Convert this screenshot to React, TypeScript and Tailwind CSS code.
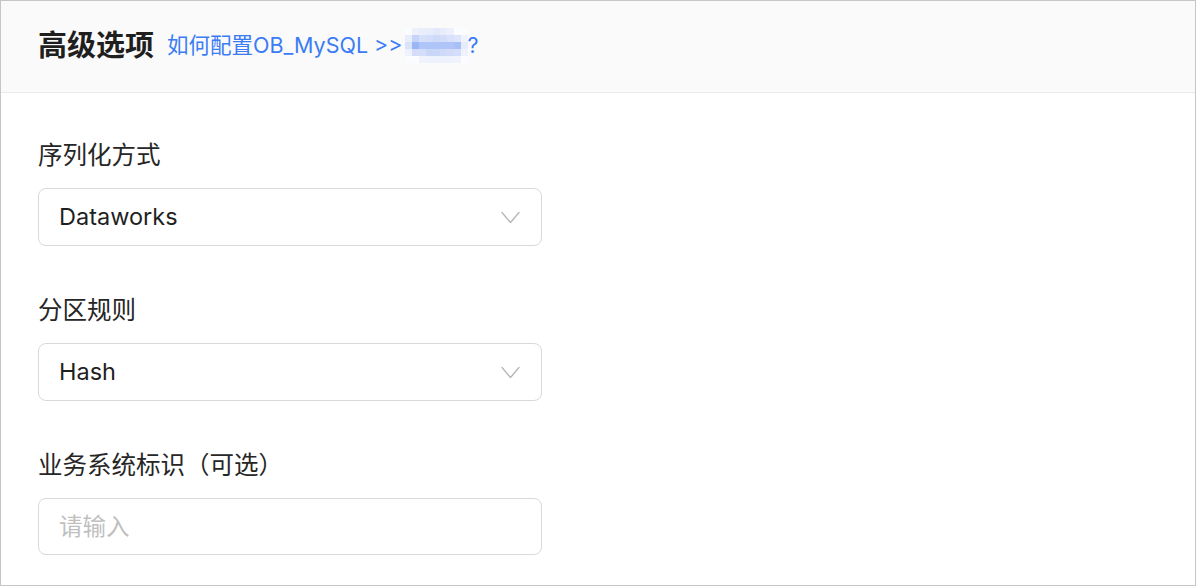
import React from "react";

const mosaic: string[][] = [
  ["#fbfcff", "#eef1fb", "#eaeefb", "#e8edfb", "#e3e9fb", "#e8edfb", "#eef1fc", "#fbfcff", "#fbfcff"],
  ["#e9eefb", "#c5d4f8", "#d6e0f9", "#d4defa", "#cfdaf9", "#d3ddf9", "#d9e2fa", "#dde5fa", "#f0f3fc"],
  ["#dbe3fa", "#9bb6f5", "#b0c5f7", "#b0c5f7", "#b0c5f7", "#b0c5f7", "#b0c5f7", "#a9c0f6", "#e6ecfb"],
  ["#eef2fc", "#d3ddf9", "#d4defa", "#c8d6f8", "#c8d6f8", "#cfdaf9", "#d2dcf9", "#d4defa", "#eef2fc"],
  ["#fbfcff", "#fbfcff", "#f0f3fc", "#eef2fc", "#eef2fc", "#eef2fc", "#eef2fc", "#f0f3fc", "#fbfcff"],
];

function Chevron() {
  return (
    <svg width="19" height="13" viewBox="0 0 19 13" fill="none" className="shrink-0">
      <path d="M1 1.5 L9.5 11.5 L18 1.5" stroke="#b5b5b5" strokeWidth="1.3" strokeLinecap="round" strokeLinejoin="round" />
    </svg>
  );
}

function Field({ label, children }: { label: string; children: React.ReactNode }) {
  return (
    <div className="flex flex-col">
      <div className="h-[32px] leading-[32px] text-[24.5px] text-[#262626]">{label}</div>
      <div className="mt-[17px]">{children}</div>
    </div>
  );
}

function Select({ value }: { value: string }) {
  return (
    <div className="w-[504px] h-[58px] border border-[#d9d9d9] rounded-[8px] bg-white flex items-center justify-between pl-[20px] pr-[21px]">
      <span className="text-[23.5px] text-[#1f1f1f]">{value}</span>
      <Chevron />
    </div>
  );
}

export default function App() {
  return (
    <div
      className="w-[1196px] h-[586px] border border-[#c6c6c6] bg-white flex flex-col overflow-hidden"
      style={{ fontFamily: 'Inter, "Noto Sans CJK SC", sans-serif' }}
    >
      <div className="h-[92px] shrink-0 bg-[#fafafa] border-b border-[#ebebeb] flex items-center pl-[37px] pb-[2px]">
        <span className="text-[29px] font-bold text-[#1f1f1f] leading-none">高级选项</span>
        <span className="ml-[13px] text-[21.5px] text-[#3b7cf5] flex items-center leading-none">
          如何配置OB_MySQL &gt;&gt;
          <span className="ml-[2px] inline-grid grid-cols-9">
            {mosaic.flatMap((row, r) =>
              row.map((c, i) => (
                <span key={`${r}-${i}`} className="w-[7px] h-[7px]" style={{ backgroundColor: c }} />
              ))
            )}
          </span>
          ?
        </span>
      </div>
      <div className="flex flex-col gap-[48px] pl-[37px] pt-[46px]">
        <Field label="序列化方式">
          <Select value="Dataworks" />
        </Field>
        <Field label="分区规则">
          <Select value="Hash" />
        </Field>
        <Field label="业务系统标识（可选）">
          <div className="w-[504px] h-[57px] border border-[#d9d9d9] rounded-[8px] bg-white flex items-center pl-[20px]">
            <span className="text-[23.5px] text-[#bfbfbf]">请输入</span>
          </div>
        </Field>
      </div>
    </div>
  );
}
